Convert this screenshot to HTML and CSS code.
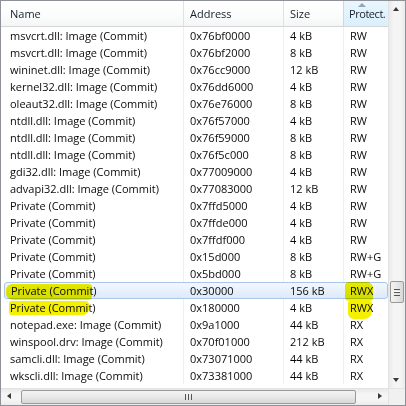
FILE: index.html
```html
<!DOCTYPE html>
<html>
<head>
<meta charset="utf-8">
<link rel="stylesheet" href="styles.css">
</head>
<body>
<div class="win">
  <div class="list">
    <div class="hdr">
      <div class="hc c1">Name</div>
      <div class="hc c2">Address</div>
      <div class="hc c3">Size</div>
      <div class="hc c4 sorted"><span class="sort"></span><span class="pt">Protect.</span></div>
    </div>
    <div class="rows">
      <div class="row"><div class="c c1">msvcrt.dll: Image (Commit)</div><div class="c c2">0x76bf0000</div><div class="c c3">4 kB</div><div class="c c4">RW</div></div>
      <div class="row"><div class="c c1">msvcrt.dll: Image (Commit)</div><div class="c c2">0x76bf2000</div><div class="c c3">8 kB</div><div class="c c4">RW</div></div>
      <div class="row"><div class="c c1">wininet.dll: Image (Commit)</div><div class="c c2">0x76cc9000</div><div class="c c3">12 kB</div><div class="c c4">RW</div></div>
      <div class="row"><div class="c c1">kernel32.dll: Image (Commit)</div><div class="c c2">0x76dd6000</div><div class="c c3">4 kB</div><div class="c c4">RW</div></div>
      <div class="row"><div class="c c1">oleaut32.dll: Image (Commit)</div><div class="c c2">0x76e76000</div><div class="c c3">8 kB</div><div class="c c4">RW</div></div>
      <div class="row"><div class="c c1">ntdll.dll: Image (Commit)</div><div class="c c2">0x76f57000</div><div class="c c3">4 kB</div><div class="c c4">RW</div></div>
      <div class="row"><div class="c c1">ntdll.dll: Image (Commit)</div><div class="c c2">0x76f59000</div><div class="c c3">8 kB</div><div class="c c4">RW</div></div>
      <div class="row"><div class="c c1">ntdll.dll: Image (Commit)</div><div class="c c2">0x76f5c000</div><div class="c c3">8 kB</div><div class="c c4">RW</div></div>
      <div class="row"><div class="c c1">gdi32.dll: Image (Commit)</div><div class="c c2">0x77009000</div><div class="c c3">4 kB</div><div class="c c4">RW</div></div>
      <div class="row"><div class="c c1">advapi32.dll: Image (Commit)</div><div class="c c2">0x77083000</div><div class="c c3">12 kB</div><div class="c c4">RW</div></div>
      <div class="row"><div class="c c1">Private (Commit)</div><div class="c c2">0x7ffd5000</div><div class="c c3">4 kB</div><div class="c c4">RW</div></div>
      <div class="row"><div class="c c1">Private (Commit)</div><div class="c c2">0x7ffde000</div><div class="c c3">4 kB</div><div class="c c4">RW</div></div>
      <div class="row"><div class="c c1">Private (Commit)</div><div class="c c2">0x7ffdf000</div><div class="c c3">4 kB</div><div class="c c4">RW</div></div>
      <div class="row"><div class="c c1">Private (Commit)</div><div class="c c2">0x15d000</div><div class="c c3">8 kB</div><div class="c c4">RW+G</div></div>
      <div class="row"><div class="c c1">Private (Commit)</div><div class="c c2">0x5bd000</div><div class="c c3">8 kB</div><div class="c c4">RW+G</div></div>
      <div class="row sel"><div class="c c1">Private (Commit)</div><div class="c c2">0x30000</div><div class="c c3">156 kB</div><div class="c c4">RWX</div></div>
      <div class="row"><div class="c c1">Private (Commit)</div><div class="c c2">0x180000</div><div class="c c3">4 kB</div><div class="c c4">RWX</div></div>
      <div class="row"><div class="c c1">notepad.exe: Image (Commit)</div><div class="c c2">0x9a1000</div><div class="c c3">44 kB</div><div class="c c4">RX</div></div>
      <div class="row"><div class="c c1">winspool.drv: Image (Commit)</div><div class="c c2">0x70f01000</div><div class="c c3">212 kB</div><div class="c c4">RX</div></div>
      <div class="row"><div class="c c1">samcli.dll: Image (Commit)</div><div class="c c2">0x73071000</div><div class="c c3">44 kB</div><div class="c c4">RX</div></div>
      <div class="row"><div class="c c1">wkscli.dll: Image (Commit)</div><div class="c c2">0x73381000</div><div class="c c3">44 kB</div><div class="c c4">RX</div></div>
    </div>
    <span class="mark m1"></span>
    <span class="mark m2"></span>
    <span class="mark m3"></span>
    <span class="mark m4"></span>
  </div>
  <div class="vscroll">
    <div class="arr up"></div>
    <div class="vtrack"><div class="vthumb"><span class="grip"></span></div></div>
    <div class="arr down"></div>
  </div>
  <div class="hscroll">
    <div class="arr left"></div>
    <div class="htrack"><div class="hthumb"><span class="hgrip"></span></div></div>
    <div class="arr right"></div>
  </div>
  <div class="corner"></div>
</div>
</body>
</html>
```
FILE: styles.css
```css
html, body {
  margin: 0;
  padding: 0;
  background: #fff;
}
.win {
  width: 404px;
  height: 404px;
  border: 1px solid #8e9197;
  display: grid;
  grid-template-columns: 387px 17px;
  grid-template-rows: 387px 17px;
  font-family: "Open Sans", "Noto Sans", sans-serif;
  font-size: 11px;
  color: #0a0a0a;
  overflow: hidden;
}
.list {
  position: relative;
  overflow: hidden;
  background: #fff;
}
.hdr, .row {
  display: grid;
  grid-template-columns: 183px 100px 60px 80px;
}
.hdr {
  height: 25px;
  border-bottom: 1px solid #d5d5d5;
  background: linear-gradient(#ffffff, #fbfcfc 60%, #f4f5f6);
}
.hc {
  position: relative;
  border-right: 1px solid #dfe2e5;
  line-height: 25px;
  padding-left: 6px;
  color: #17202c;
  white-space: nowrap;
}
.hc.c1 { padding-left: 9px; }
.hc.sorted {
  background: linear-gradient(#eaf6fd, #d9f0fc);
  border-right-color: #c0dcf0;
  border-left: 1px solid #c0dcf0;
  margin-left: -1px;
  padding-left: 5px;
}
.pt {
  letter-spacing: -0.45px;
}
.sort {
  position: absolute;
  left: 14px;
  top: 2px;
  width: 0;
  height: 0;
  border-left: 4px solid transparent;
  border-right: 4px solid transparent;
  border-bottom: 4px solid #8fa6bd;
}
.row {
  height: 17px;
  line-height: 17px;
  white-space: nowrap;
}
.c {
  border-right: 1px solid #efefef;
  padding-left: 6px;
  overflow: hidden;
}
.c.c1 { padding-left: 9px; }
.row.sel {
  margin-left: 3px;
  background: linear-gradient(#f2f8fe, #dde9fa);
  border: 1px solid #a9c6ea;
  border-radius: 3px;
  height: 15px;
  line-height: 15px;
  grid-template-columns: 179px 100px 60px 80px;
}
.row.sel .c { border-right-color: transparent; }
.row.sel .c.c1 { padding-left: 6px; }
.mark {
  position: absolute;
  background: #f4f000;
  mix-blend-mode: multiply;
}
.m1 { left: 5px; top: 283px; width: 86px; height: 16px; border-radius: 6px 3px 4px 7px; }
.m2 { left: 8px; top: 300px; width: 80px; height: 14px; border-radius: 2px 4px 6px 3px; }
.m3 { left: 344px; top: 281px; width: 28px; height: 19px; border-radius: 4px 6px 3px 4px; }
.m4 { left: 347px; top: 300px; width: 24px; height: 18px; border-radius: 2px 3px 8px 6px; }
.vscroll {
  display: flex;
  flex-direction: column;
  background: linear-gradient(90deg, #e9e9e9, #f5f5f5 30%, #f5f5f5 70%, #ebebeb);
  border-left: 1px solid #e3e3e3;
}
.hscroll {
  display: flex;
  background: linear-gradient(#e9e9e9, #f5f5f5 30%, #f5f5f5 70%, #ebebeb);
  border-top: 1px solid #e3e3e3;
}
.arr {
  flex: 0 0 17px;
  position: relative;
}
.arr::after {
  content: "";
  position: absolute;
  width: 0;
  height: 0;
}
.up::after {
  left: 4px; top: 6px;
  border-left: 3.5px solid transparent;
  border-right: 3.5px solid transparent;
  border-bottom: 4px solid #3a3a3a;
}
.down::after {
  left: 4px; top: 7px;
  border-left: 3.5px solid transparent;
  border-right: 3.5px solid transparent;
  border-top: 4px solid #3a3a3a;
}
.left::after {
  left: 6px; top: 4px;
  border-top: 3.5px solid transparent;
  border-bottom: 3.5px solid transparent;
  border-right: 4px solid #3a3a3a;
}
.right::after {
  left: 7px; top: 4px;
  border-top: 3.5px solid transparent;
  border-bottom: 3.5px solid transparent;
  border-left: 4px solid #3a3a3a;
}
.vtrack {
  flex: 1;
  position: relative;
}
.vthumb {
  position: absolute;
  left: 1px;
  right: 1px;
  top: 263px;
  height: 20px;
  border: 1px solid #9a9a9a;
  border-radius: 2px;
  background: linear-gradient(90deg, #f3f3f3, #e8e8e8 50%, #d8d8d8);
  display: flex;
  align-items: center;
  justify-content: center;
}
.grip {
  width: 6px;
  height: 5px;
  border-top: 1px solid #555;
  border-bottom: 1px solid #555;
  background: linear-gradient(#fff 0, #fff 1px, #555 1px, #555 2px, #fff 2px);
  background-size: 100% 2px;
  background-position: 0 1px;
  background-repeat: no-repeat;
}
.htrack {
  flex: 1;
  position: relative;
}
.hthumb {
  position: absolute;
  top: 1px;
  bottom: 1px;
  left: 3px;
  width: 333px;
  border: 1px solid #9a9a9a;
  border-radius: 2px;
  background: linear-gradient(#f3f3f3, #e8e8e8 50%, #d8d8d8);
  display: flex;
  align-items: center;
  justify-content: center;
}
.hgrip {
  width: 5px;
  height: 6px;
  border-left: 1px solid #555;
  border-right: 1px solid #555;
  background: linear-gradient(90deg, transparent 2px, #555 2px, #555 3px, transparent 3px);
}
.corner {
  background: #f0f0f0;
  border-left: 1px solid #e3e3e3;
  border-top: 1px solid #e3e3e3;
}
```
